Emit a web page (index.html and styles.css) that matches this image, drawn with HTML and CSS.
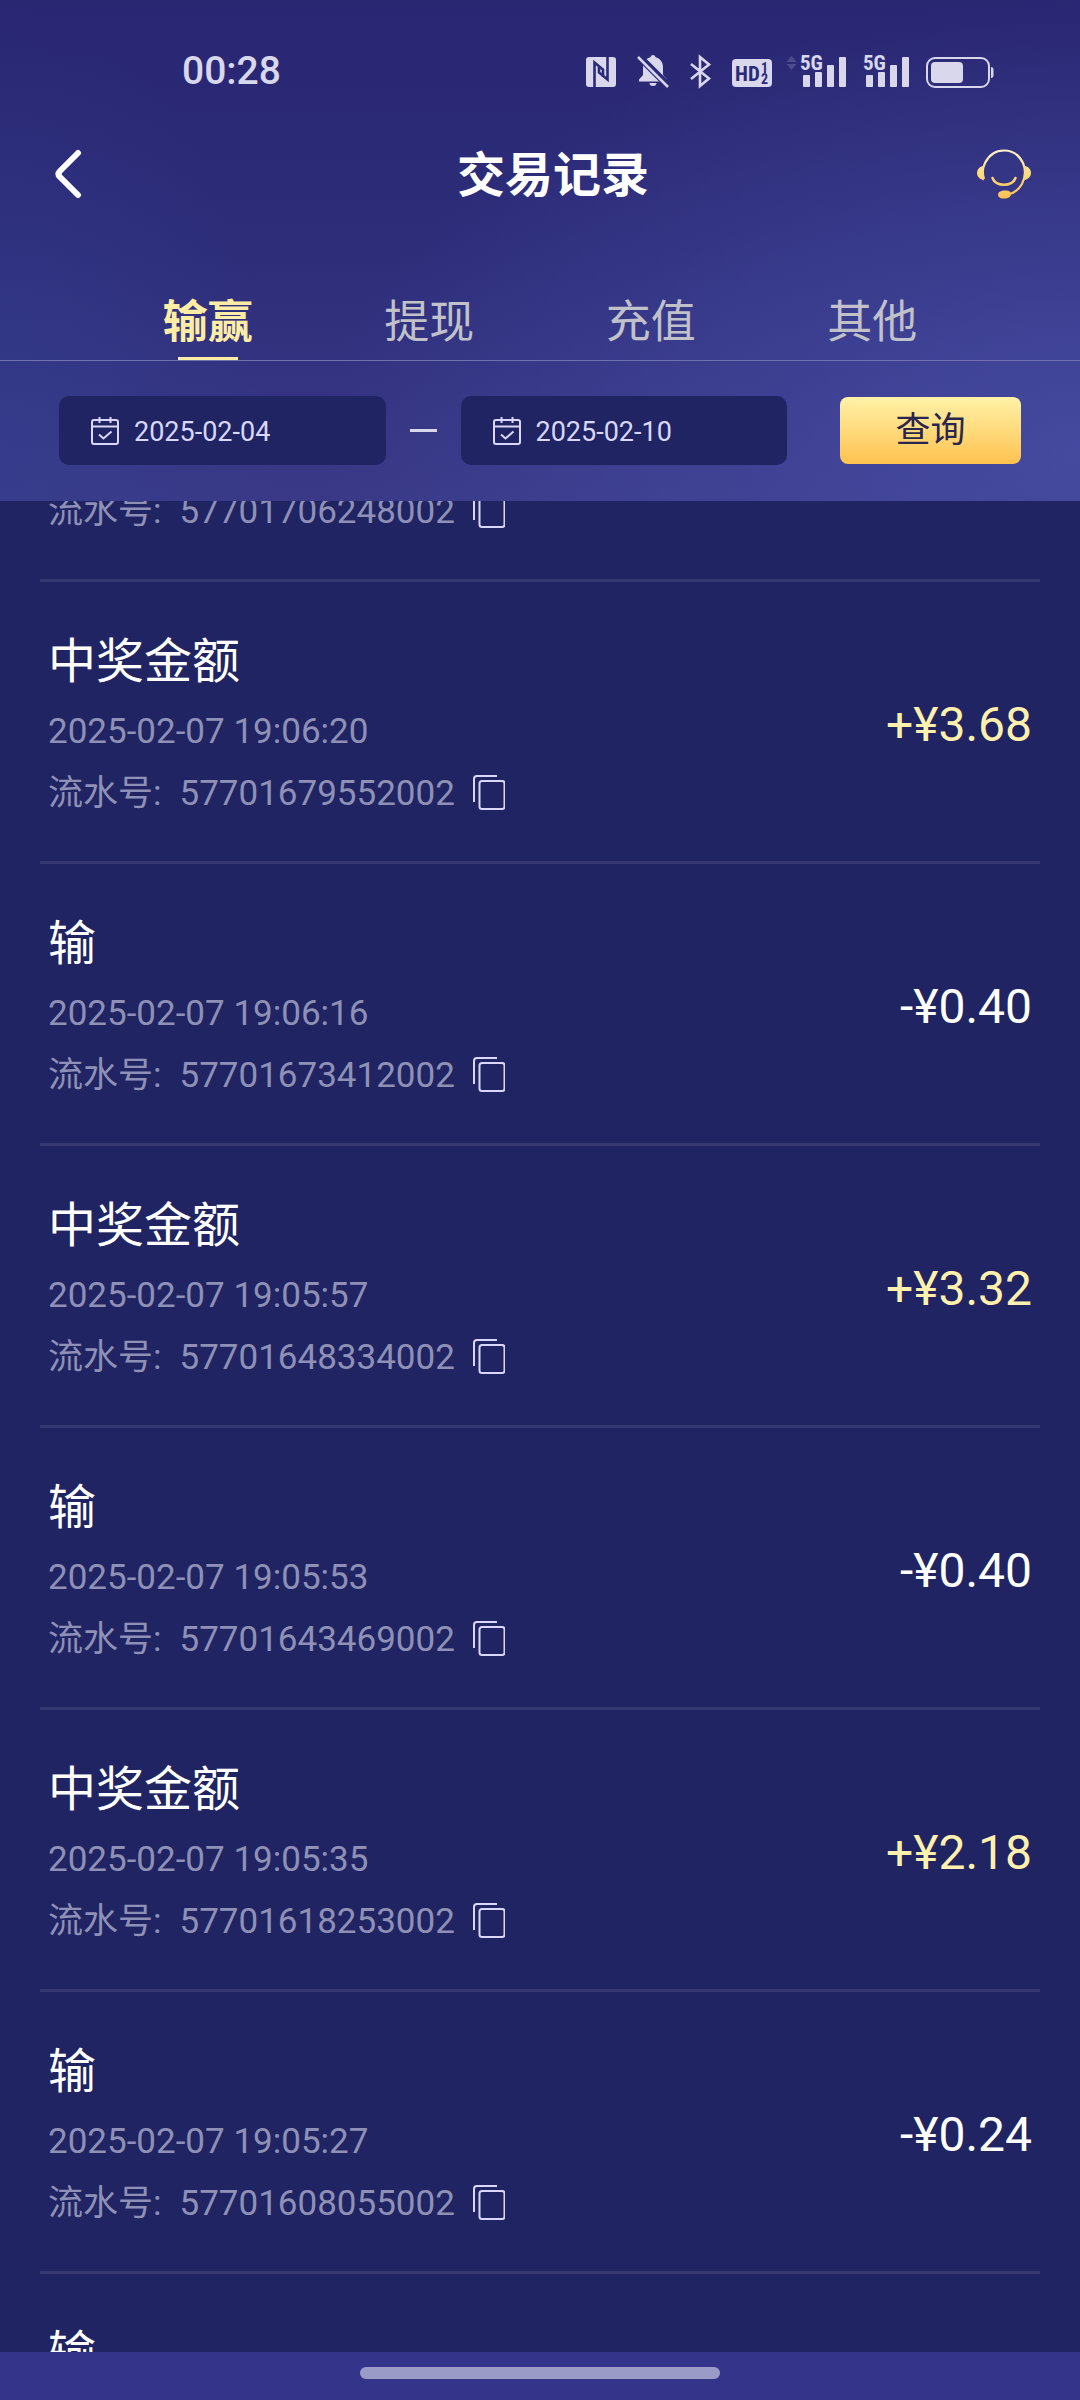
FILE: index.html
```html
<!DOCTYPE html>
<html lang="zh-CN">
<head>
<meta charset="utf-8">
<meta name="viewport" content="width=device-width, initial-scale=1">
<title>交易记录</title>
<link rel="stylesheet" href="styles.css">
</head>
<body>
<svg class="sprite" aria-hidden="true">
  <symbol id="copy" viewBox="0 0 32 35">
    <path d="M1 27V4a3 3 0 0 1 3-3h20" />
    <rect x="6.500" y="6" width="25" height="28" rx="2.500" />
  </symbol>
  <symbol id="calendar" viewBox="0 0 28 28">
    <rect x="1" y="3" width="26" height="24" rx="2" />
    <path d="M1 9.500h26M8.500 0v6M19.500 0v6M8 17.500l4.500 4 8-7" />
  </symbol>
  <symbol id="signal" viewBox="0 0 46 33">
    <rect x="3" y="20" width="7" height="12" rx="1" />
    <rect x="15" y="17" width="7" height="15" rx="1" />
    <rect x="27" y="10" width="7" height="22" rx="1" />
    <rect x="39" y="2" width="7" height="30" rx="1" />
  </symbol>
</svg>

<div class="app">
  <header class="top">
    <div class="status">
      <time class="status-time">00:28</time>
      <div class="status-icons">
        <svg width="30" height="33" viewBox="0 0 30 33" aria-label="NFC">
          <rect y="2" width="30" height="30" rx="3" fill="currentColor" />
          <path d="M8.500 32V7.500l8.500 7v7.500M21.500 2v22.500l-8.500-7V12" fill="none" stroke="#2b2a78" stroke-width="2.600" />
        </svg>
        <svg width="32" height="33" viewBox="0 0 32 33" aria-label="静音">
          <path d="M16 0c1.500 0 2.300 1 2.500 2.200 4.500 1.200 7.500 4.800 7.500 9.800v8l4 4.500v2H2v-2L6 20v-8c0-5 3-8.600 7.500-9.800C13.700 1 14.500 0 16 0zM12.500 28h7a3.500 3 0 0 1-7 0z" fill="currentColor" />
          <path d="M-1-1.500l34 34" stroke="#2b2a78" stroke-width="7" />
          <path d="M1 2l30 30" stroke="currentColor" stroke-width="2.500" />
        </svg>
        <svg width="21" height="33" viewBox="0 0 21 33" fill="none" stroke="currentColor" stroke-width="2.600" aria-label="蓝牙">
          <path d="M1 9l18 14.500-9 7.500V2l9 7.500L1 24" />
        </svg>
        <svg width="40" height="33" viewBox="0 0 40 33" aria-label="HD">
          <rect y="4" width="40" height="28" rx="4" fill="currentColor" />
          <text class="hd" x="3" y="26">HD</text>
          <text class="hd-sub" x="29" y="18">1</text>
          <text class="hd-sub" x="29" y="29">2</text>
        </svg>
        <svg class="arrows" width="11" height="33" viewBox="0 0 11 33" fill="currentColor" aria-hidden="true">
          <path d="M5.500 1l5 6h-10zM5.500 15l5-6h-10z" />
        </svg>
        <svg class="sim" width="46" height="33" viewBox="0 0 46 33" fill="currentColor"><use href="#signal" /><text class="net" x="0" y="15">5G</text></svg>
        <svg class="sim-second" width="46" height="33" viewBox="0 0 46 33" fill="currentColor"><use href="#signal" /><text class="net" x="0" y="15">5G</text></svg>
        <svg width="68" height="33" viewBox="0 0 68 33" aria-label="电量">
          <rect x="1" y="3" width="62" height="29" rx="8" fill="none" stroke="currentColor" stroke-width="2" />
          <rect x="5" y="7" width="32" height="21" rx="4" fill="currentColor" />
          <path d="M65 12q2.500 0 2.500 3v5q0 3-2.500 3z" fill="currentColor" />
        </svg>
      </div>
    </div>

    <div class="titlebar">
      <button class="icon-button back" type="button" aria-label="返回">
        <svg width="28" height="50" viewBox="0 0 28 50" fill="none" stroke="#fff" stroke-width="6" stroke-linecap="round" stroke-linejoin="round"><path d="M24 4L6 22q-3 3 0 6l18 18" /></svg>
      </button>
      <h1 class="title">交易记录</h1>
      <button class="icon-button" type="button" aria-label="客服">
        <svg width="56" height="50" viewBox="0 0 56 50" fill="none">
          <defs><linearGradient id="gold" gradientUnits="userSpaceOnUse" x1="0" y1="0" x2="0" y2="50"><stop offset="0" stop-color="#fff3d0" /><stop offset="0.500" stop-color="#ffdc80" /><stop offset="1" stop-color="#ffbe50" /></linearGradient></defs>
          <path d="M8 30C6 24 7 18 9 14 13 6 20 1.500 28 1.500S43 6 47 14c3 7 2 15-1 21-3 5-7 9-13 10" stroke="url(#gold)" stroke-width="2.200" />
          <path d="M16.500 29c3 9 20 9 23 0" stroke="url(#gold)" stroke-width="2.500" stroke-linecap="round" />
          <path d="M7 17c-4 1-6 4-6 7s2 6 7 7.500q-2-7-1-14.500zM49 17c4 1 6 4 6 7s-2 6-7 7.500q2-7 1-14.500zM27 41.500h3q5 0 5 3.500t-5 4.500h-4q-4-1-4-4t5-4z" fill="url(#gold)" />
        </svg>
      </button>
    </div>

    <nav class="tabs">
      <a class="tab tab-active" href="#win" aria-current="page">输赢</a>
      <a class="tab" href="#withdraw">提现</a>
      <a class="tab" href="#deposit">充值</a>
      <a class="tab" href="#other">其他</a>
    </nav>

    <form class="filter">
      <label class="date">
        <svg width="28" height="28" class="line-icon" aria-hidden="true"><use href="#calendar" /></svg>
        <input type="text" value="2025-02-04" aria-label="开始日期">
      </label>
      <span class="dash"></span>
      <label class="date">
        <svg width="28" height="28" class="line-icon" aria-hidden="true"><use href="#calendar" /></svg>
        <input type="text" value="2025-02-10" aria-label="结束日期">
      </label>
      <button class="query" type="button">查询</button>
    </form>
  </header>

  <main class="list">
    <ul class="records">
      <li class="record record-first">
        <div class="info"><p class="meta"><span>流水号:</span><span>57701706248002</span><button class="copy" type="button" aria-label="复制"><svg width="32" height="35" class="line-icon"><use href="#copy" /></svg></button></p></div>
      </li>
      <li class="record">
        <div class="info"><h2 class="kind">中奖金额</h2><p class="meta">2025-02-07 19:06:20</p><p class="meta"><span>流水号:</span><span>57701679552002</span><button class="copy" type="button" aria-label="复制"><svg width="32" height="35" class="line-icon"><use href="#copy" /></svg></button></p></div>
        <span class="amount gain">+¥3.68</span>
      </li>
      <li class="record">
        <div class="info"><h2 class="kind">输</h2><p class="meta">2025-02-07 19:06:16</p><p class="meta"><span>流水号:</span><span>57701673412002</span><button class="copy" type="button" aria-label="复制"><svg width="32" height="35" class="line-icon"><use href="#copy" /></svg></button></p></div>
        <span class="amount">-¥0.40</span>
      </li>
      <li class="record">
        <div class="info"><h2 class="kind">中奖金额</h2><p class="meta">2025-02-07 19:05:57</p><p class="meta"><span>流水号:</span><span>57701648334002</span><button class="copy" type="button" aria-label="复制"><svg width="32" height="35" class="line-icon"><use href="#copy" /></svg></button></p></div>
        <span class="amount gain">+¥3.32</span>
      </li>
      <li class="record">
        <div class="info"><h2 class="kind">输</h2><p class="meta">2025-02-07 19:05:53</p><p class="meta"><span>流水号:</span><span>57701643469002</span><button class="copy" type="button" aria-label="复制"><svg width="32" height="35" class="line-icon"><use href="#copy" /></svg></button></p></div>
        <span class="amount">-¥0.40</span>
      </li>
      <li class="record">
        <div class="info"><h2 class="kind">中奖金额</h2><p class="meta">2025-02-07 19:05:35</p><p class="meta"><span>流水号:</span><span>57701618253002</span><button class="copy" type="button" aria-label="复制"><svg width="32" height="35" class="line-icon"><use href="#copy" /></svg></button></p></div>
        <span class="amount gain">+¥2.18</span>
      </li>
      <li class="record">
        <div class="info"><h2 class="kind">输</h2><p class="meta">2025-02-07 19:05:27</p><p class="meta"><span>流水号:</span><span>57701608055002</span><button class="copy" type="button" aria-label="复制"><svg width="32" height="35" class="line-icon"><use href="#copy" /></svg></button></p></div>
        <span class="amount">-¥0.24</span>
      </li>
      <li class="record">
        <div class="info"><h2 class="kind">输</h2></div>
      </li>
    </ul>
  </main>

  <footer class="gesture"><span class="pill"></span></footer>
</div>
</body>
</html>
```
FILE: styles.css
```css
* {
  box-sizing: border-box;
}

body {
  margin: 0;
  background: #202463;
  color: #fff;
  font-family: Roboto, "Noto Sans CJK SC", sans-serif;
}

h1, h2, p, ul {
  margin: 0;
  padding: 0;
  font-weight: 400;
}

button {
  border: 0;
  padding: 0;
  background: none;
  color: inherit;
  font: inherit;
}

svg {
  display: block;
  flex: none;
}

.sprite {
  position: absolute;
  width: 0;
  height: 0;
}

.line-icon {
  fill: none;
  stroke: #d9d8fa;
  stroke-width: 2;
}

.app {
  display: flex;
  flex-direction: column;
  height: 100vh;
}

/* Header */
.top {
  flex: none;
  background:
    radial-gradient(ellipse 70% 90% at 100% 90%, rgba(74, 80, 168, 0.75), rgba(74, 80, 168, 0)),
    radial-gradient(ellipse 25% 90% at 0% 90%, rgba(52, 68, 148, 0.4), rgba(52, 68, 148, 0)),
    linear-gradient(#292672, #2d2d7a 50%, #393987);
}

.status {
  display: flex;
  align-items: center;
  justify-content: space-between;
  height: 142px;
  padding: 0 86px 0 182px;
  color: #d8d7ec;
}

.status-time {
  font-size: 39px;
  font-weight: 500;
}

.status-icons {
  display: flex;
  align-items: center;
}

.status-icons svg {
  margin-left: 21px;
  overflow: visible;
}

.status-icons .arrows {
  margin-left: 14px;
  opacity: 0.2;
}

.status-icons .sim {
  margin-left: 3px;
}

.status-icons .sim-second,
.status-icons svg:last-child {
  margin-left: 17px;
}

.hd, .hd-sub, .net {
  font-family: "Roboto Condensed", "Liberation Sans Narrow", Roboto, sans-serif;
  font-weight: 700;
}

.hd {
  fill: #2b2a78;
  font-size: 21px;
}

.hd-sub {
  fill: #2b2a78;
  font-size: 14px;
}

.net {
  font-size: 21px;
  paint-order: stroke;
  stroke: #2d2c7b;
  stroke-width: 3px;
}

.titlebar {
  display: flex;
  align-items: center;
  justify-content: space-between;
  height: 64px;
  padding: 0 48px 0 54px;
}

.icon-button {
  display: flex;
  width: 56px;
}

.back {
  width: 76px;
}

.title {
  padding-top: 4px;
  font-size: 48px;
  font-weight: 700;
  line-height: 64px;
}

.tabs {
  display: flex;
  padding: 74px 97px 0;
  border-bottom: 1px solid #7072ad;
}

.tab {
  display: flex;
  flex: 1;
  flex-direction: column;
  align-items: center;
  height: 80px;
  padding-top: 8px;
  color: #c1c1c9;
  font-size: 45px;
  line-height: 69px;
  text-decoration: none;
}

.tab-active {
  color: #ffeda6;
  font-weight: 700;
}

.tab-active::after {
  content: "";
  width: 60px;
  height: 3px;
  background: #ffeda6;
}

.filter {
  display: flex;
  align-items: center;
  padding: 35px 59px 36px;
}

.date {
  display: flex;
  flex: 1;
  align-items: center;
  gap: 15px;
  min-width: 0;
  height: 69px;
  padding: 0 32px;
  border-radius: 10px;
  background: #202463;
}

.date input {
  width: 100%;
  min-width: 0;
  padding: 2px 0 0;
  border: 0;
  background: none;
  color: #d9d8fa;
  font: 27px/36px Roboto, sans-serif;
}

.dash {
  width: 27px;
  height: 3px;
  margin: 0 24px;
  background: #d8d7ec;
}

.query {
  width: 181px;
  height: 67px;
  margin-left: 53px;
  border-radius: 8px;
  background: linear-gradient(#fff2a8, #ffc250);
  color: #28254f;
  font-size: 35px;
  line-height: 65px;
}

/* Records */
.list {
  flex: 1;
  min-height: 0;
  overflow: hidden;
  padding: 0 40px;
}

.records {
  list-style: none;
}

.record {
  display: flex;
  align-items: center;
  justify-content: space-between;
  padding: 41px 8px 36px;
  border-bottom: 3px solid #353873;
}

/* The list is scrolled: the first row is partly under the header. */
.record-first {
  margin-top: -20px;
  padding-top: 0;
}

.kind {
  font-size: 48px;
  line-height: 78px;
}

.meta {
  display: flex;
  align-items: center;
  gap: 18px;
  color: #8f90b6;
  font-size: 35px;
  line-height: 62px;
}

.copy {
  padding-bottom: 3px;
}

.amount {
  font-size: 48px;
}

.gain {
  color: #fff0ae;
}

/* System gesture bar */
.gesture {
  display: flex;
  flex: none;
  justify-content: center;
  padding: 15px 0 21px;
  background: #34358a;
}

.pill {
  width: 33.33%;
  height: 12px;
  border-radius: 6px;
  background: #9b9bc8;
}
```
